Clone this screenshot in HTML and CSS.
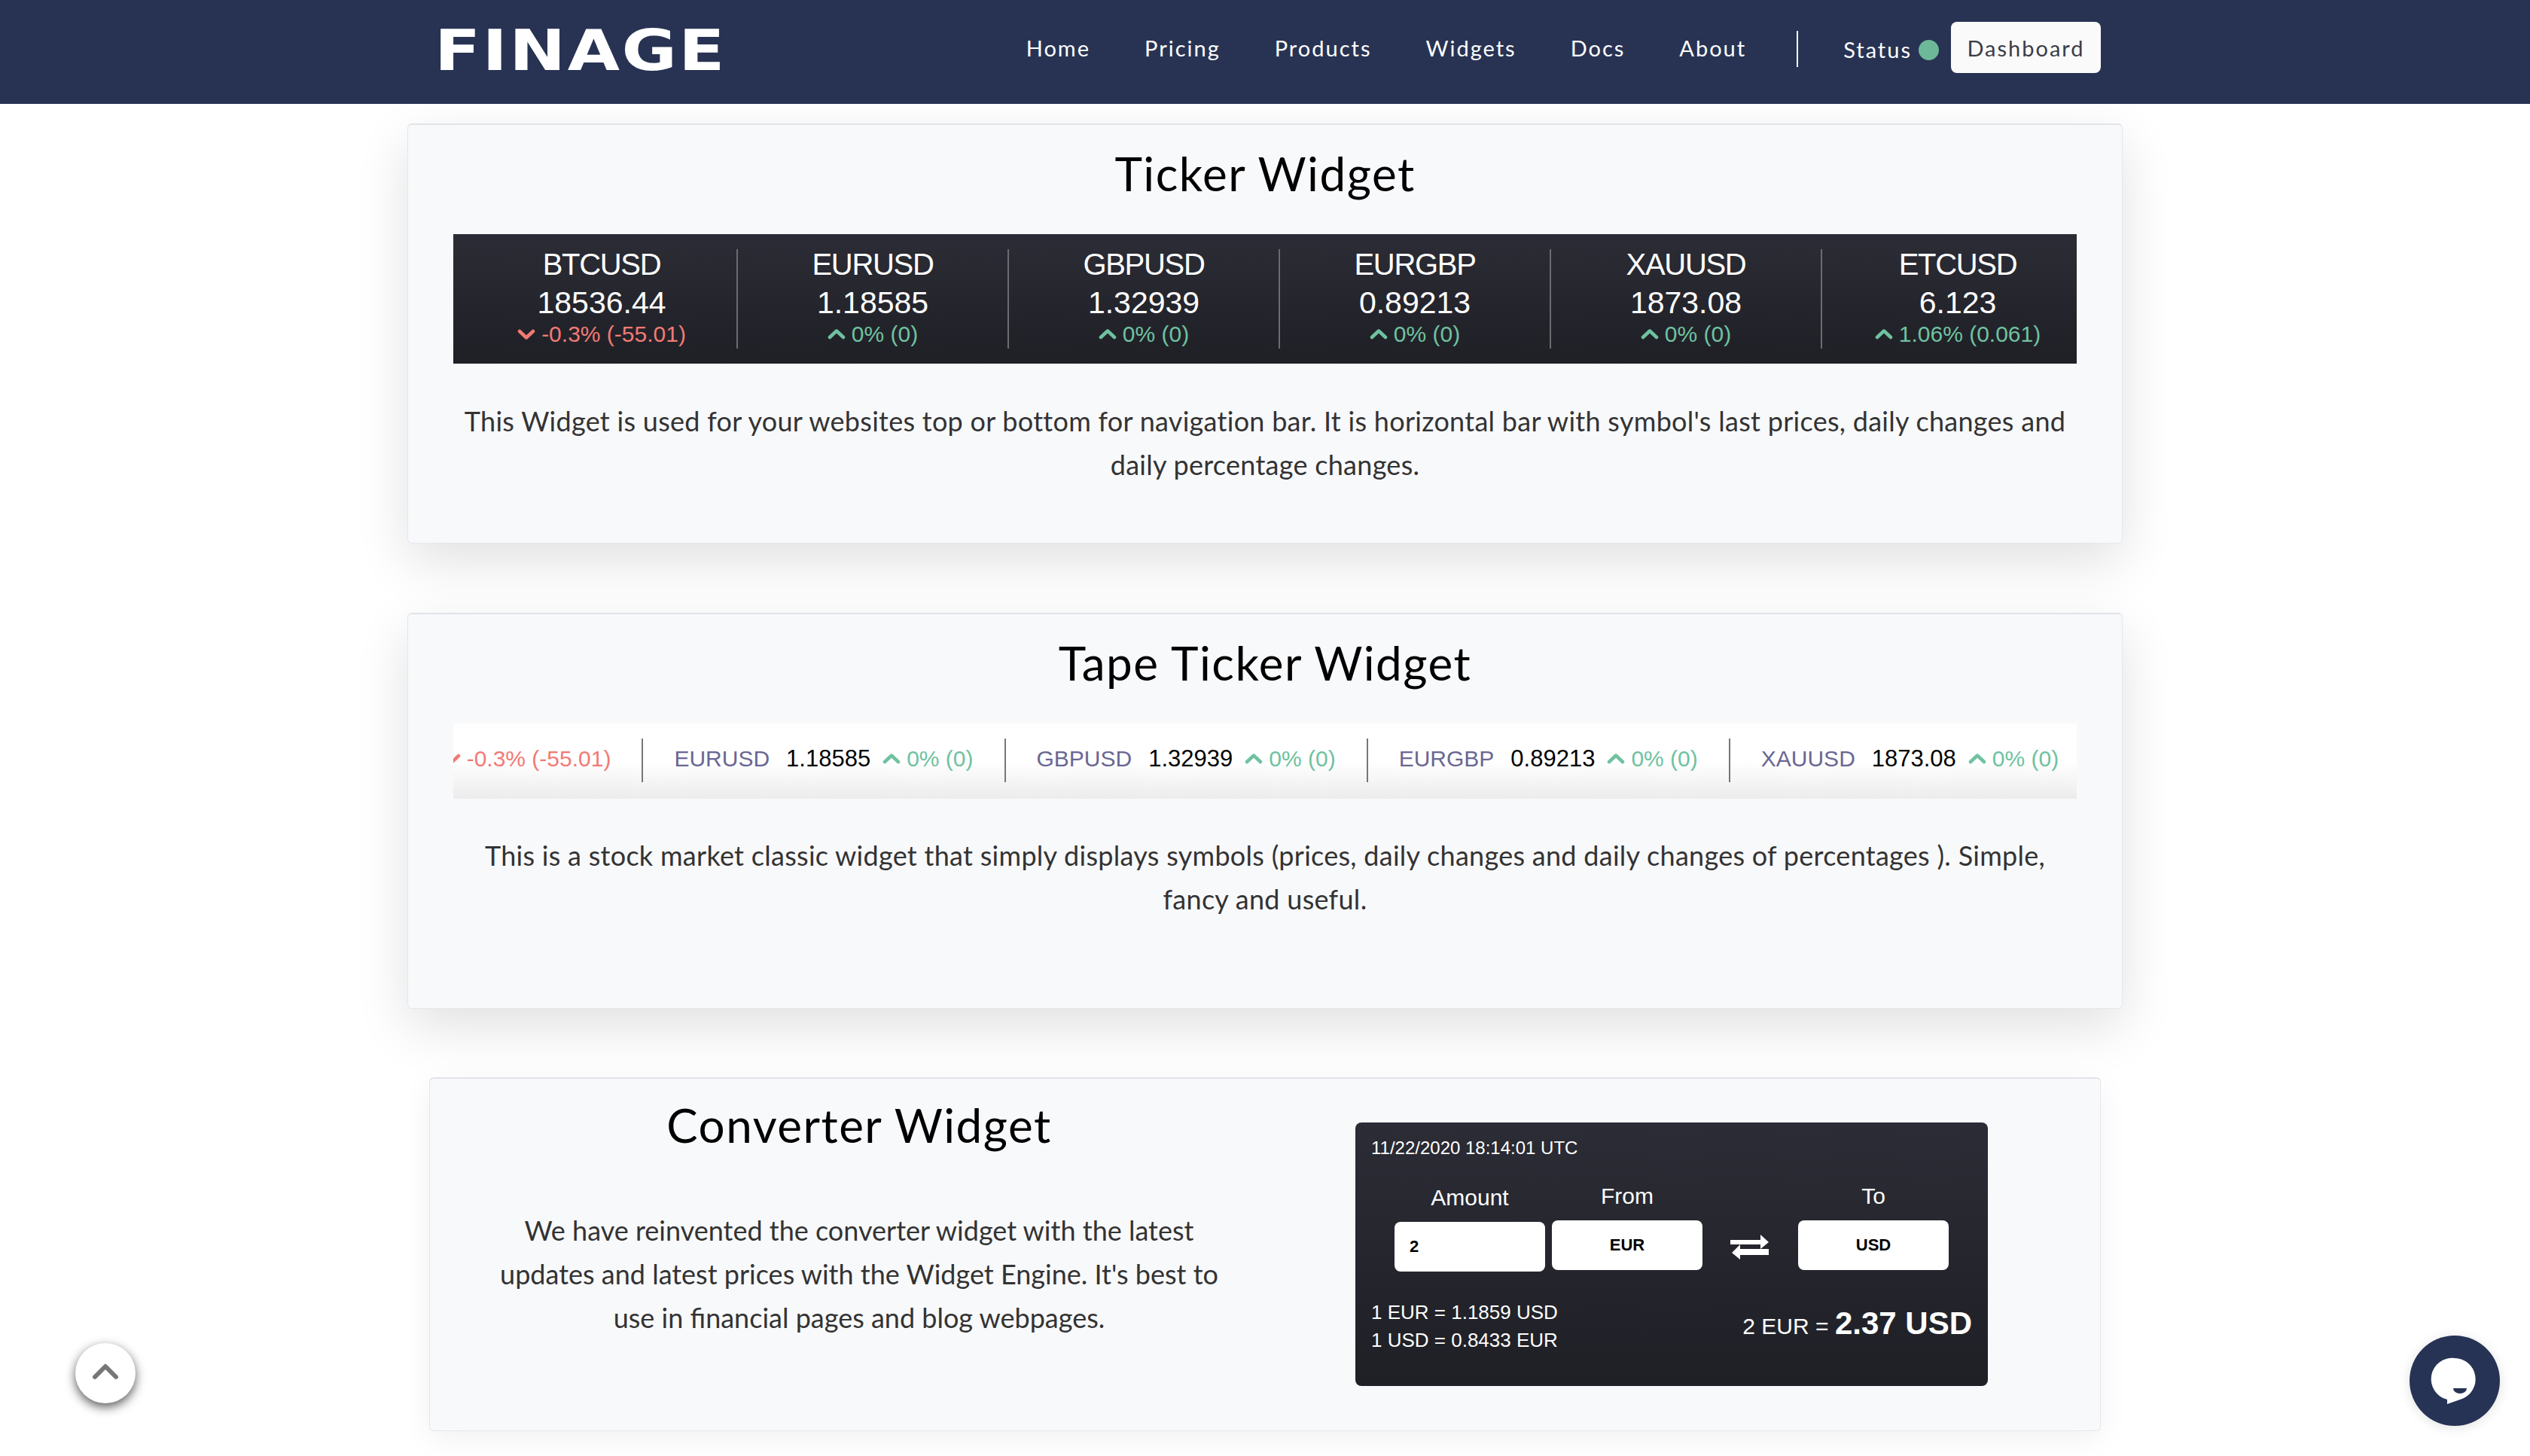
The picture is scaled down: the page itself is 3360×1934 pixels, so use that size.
FILE: index.html
```html
<!DOCTYPE html>
<html lang="en">

<head>
    <meta charset="UTF-8">
    <meta name="viewport" content="width=device-width, initial-scale=1.0">
    <title>Finage Widgets</title>
    <link rel="stylesheet" href="styles.css">
</head>

<body>
    <header class="topbar">
        <a class="logo"><span>FINAGE</span></a>
        <nav class="nav">
            <a>Home</a>
            <a>Pricing</a>
            <a>Products</a>
            <a>Widgets</a>
            <a>Docs</a>
            <a>About</a>
        </nav>
        <span class="nav-line"></span>
        <a class="status">Status</a>
        <span class="status-dot"></span>
        <a class="dash-btn">Dashboard</a>
    </header>

    <main class="main">
        <section class="card">
            <h2 class="title">Ticker Widget</h2>
            <div class="ticker">
                <div class="tick">
                    <div class="tick-sym">BTCUSD</div>
                    <div class="tick-price">18536.44</div>
                    <div class="tick-change red"><svg class="chev" viewBox="0 0 24 14"><path d="M3 3l9 8.500 9-8.500"/></svg>-0.3% (-55.01)</div>
                </div>
                <div class="tick">
                    <div class="tick-sym">EURUSD</div>
                    <div class="tick-price">1.18585</div>
                    <div class="tick-change green"><svg class="chev" viewBox="0 0 24 14"><path d="M3 11l9-8.500 9 8.500"/></svg>0% (0)</div>
                </div>
                <div class="tick">
                    <div class="tick-sym">GBPUSD</div>
                    <div class="tick-price">1.32939</div>
                    <div class="tick-change green"><svg class="chev" viewBox="0 0 24 14"><path d="M3 11l9-8.500 9 8.500"/></svg>0% (0)</div>
                </div>
                <div class="tick">
                    <div class="tick-sym">EURGBP</div>
                    <div class="tick-price">0.89213</div>
                    <div class="tick-change green"><svg class="chev" viewBox="0 0 24 14"><path d="M3 11l9-8.500 9 8.500"/></svg>0% (0)</div>
                </div>
                <div class="tick">
                    <div class="tick-sym">XAUUSD</div>
                    <div class="tick-price">1873.08</div>
                    <div class="tick-change green"><svg class="chev" viewBox="0 0 24 14"><path d="M3 11l9-8.500 9 8.500"/></svg>0% (0)</div>
                </div>
                <div class="tick">
                    <div class="tick-sym">ETCUSD</div>
                    <div class="tick-price">6.123</div>
                    <div class="tick-change green"><svg class="chev" viewBox="0 0 24 14"><path d="M3 11l9-8.500 9 8.500"/></svg>1.06% (0.061)</div>
                </div>
            </div>
            <p class="desc">This Widget is used for your websites top or bottom for navigation bar. It is horizontal bar with symbol's last prices, daily changes and daily percentage changes.</p>
        </section>

        <section class="card card-tape">
            <h2 class="title">Tape Ticker Widget</h2>
            <div class="tape">
                <div class="tape-track">
                    <div class="tape-item">
                        <span class="tape-sym">BTCUSD</span>
                        <span class="tape-price">18536.44</span>
                        <span class="tape-change red"><svg class="chev" viewBox="0 0 24 14"><path d="M3 3l9 8.500 9-8.500"/></svg>-0.3% (-55.01)</span>
                    </div>
                    <div class="tape-item">
                        <span class="tape-sym">EURUSD</span>
                        <span class="tape-price">1.18585</span>
                        <span class="tape-change green"><svg class="chev" viewBox="0 0 24 14"><path d="M3 11l9-8.500 9 8.500"/></svg>0% (0)</span>
                    </div>
                    <div class="tape-item">
                        <span class="tape-sym">GBPUSD</span>
                        <span class="tape-price">1.32939</span>
                        <span class="tape-change green"><svg class="chev" viewBox="0 0 24 14"><path d="M3 11l9-8.500 9 8.500"/></svg>0% (0)</span>
                    </div>
                    <div class="tape-item">
                        <span class="tape-sym">EURGBP</span>
                        <span class="tape-price">0.89213</span>
                        <span class="tape-change green"><svg class="chev" viewBox="0 0 24 14"><path d="M3 11l9-8.500 9 8.500"/></svg>0% (0)</span>
                    </div>
                    <div class="tape-item">
                        <span class="tape-sym">XAUUSD</span>
                        <span class="tape-price">1873.08</span>
                        <span class="tape-change green"><svg class="chev" viewBox="0 0 24 14"><path d="M3 11l9-8.500 9 8.500"/></svg>0% (0)</span>
                    </div>
                </div>
            </div>
            <p class="desc">This is a stock market classic widget that simply displays symbols (prices, daily changes and daily changes of percentages ). Simple, fancy and useful.</p>
        </section>

        <section class="card card-conv">
            <div class="conv-text">
                <h2 class="title">Converter Widget</h2>
                <p class="desc">We have reinvented the converter widget with the latest updates and latest prices with the Widget Engine. It's best to use in financial pages and blog webpages.</p>
            </div>
            <div class="conv-side">
                <div class="conv">
                    <div class="conv-date">11/22/2020 18:14:01 UTC</div>
                    <div class="conv-form">
                        <div class="conv-field conv-amount">
                            <label>Amount</label>
                            <div class="conv-input">2</div>
                        </div>
                        <div class="conv-field">
                            <label>From</label>
                            <div class="conv-select">EUR</div>
                        </div>
                        <svg class="swap" viewBox="0 0 51 36"><path d="M0 9h40V2l11 10-11 9v-6H0zM51 21H13v-6L2 26l11 9v-6h38z" fill="#fff" fill-rule="evenodd"/></svg>
                        <div class="conv-field">
                            <label>To</label>
                            <div class="conv-select">USD</div>
                        </div>
                    </div>
                    <div class="conv-foot">
                        <div class="conv-rates">
                            <div>1 EUR = 1.1859 USD</div>
                            <div>1 USD = 0.8433 EUR</div>
                        </div>
                        <div class="conv-result">2 EUR = <b>2.37 USD</b></div>
                    </div>
                </div>
            </div>
        </section>
    </main>

    <a class="to-top"><svg viewBox="0 0 36 22"><path d="M4 18L18 4l14 14"/></svg></a>
    <a class="chat">
        <svg viewBox="0 0 120 120">
            <path d="M60 30a28 28 0 0 1 10 54l-20 7 0-6a28 28 0 0 1 10-55z" fill="#fff"/>
            <path d="M58 70h18a9 7 0 0 1-18 0z" fill="#263354"/>
        </svg>
    </a>
</body>

</html>
```

FILE: styles.css
```css
* {
    margin: 0;
    padding: 0;
    box-sizing: border-box;
}

body {
    height: 1934px;
    overflow: hidden;
    background: #fff;
    font-family: "Lato", "Noto Sans", sans-serif;
    color: #000;
}

/* top bar */
.topbar {
    height: 138px;
    background: #283353;
    display: flex;
    align-items: center;
    padding: 0 570px 0 577px;
    color: #fff;
    position: relative;
    z-index: 2;
}

.logo {
    font-family: "DejaVu Sans", sans-serif;
    font-weight: 700;
    font-size: 74px;
    letter-spacing: 2px;
    line-height: 1;
    margin-right: auto;
    margin-top: -4px;
}

.logo span {
    display: inline-block;
    transform: scaleX(1.21);
    transform-origin: left center;
}

.nav {
    display: flex;
    gap: 72px;
    font-size: 29px;
    letter-spacing: 2px;
    margin-top: -12px;
}

.nav-line {
    width: 2px;
    height: 48px;
    background: #fff;
    margin: -8px 60px 0 67px;
}

.status {
    font-size: 29px;
    letter-spacing: 2px;
    margin-top: -8px;
}

.status-dot {
    width: 27px;
    height: 27px;
    border-radius: 50%;
    background: #6cb899;
    margin: -6px 16px 0 9px;
}

.dash-btn {
    width: 199px;
    height: 68px;
    background: #fafafa;
    border-radius: 8px;
    color: #3a3d47;
    font-size: 29px;
    letter-spacing: 2px;
    display: flex;
    align-items: center;
    justify-content: center;
    margin-top: -12px;
}

/* cards */
.main {
    padding-top: 26px;
    display: flex;
    flex-direction: column;
    align-items: center;
}

.card {
    width: 2278px;
    height: 558px;
    background: #f8f9fb;
    border: 1px solid #e6e7ec;
    border-top: 2px solid #e1e3e9;
    border-radius: 6px;
    box-shadow: 0 24px 70px rgba(0, 0, 0, 0.12);
    padding: 0 60px;
    margin-bottom: 92px;
}

.card-tape {
    height: 526px;
    margin-bottom: 91px;
}

.card-conv {
    width: 2220px;
    height: 470px;
    padding: 0;
    display: grid;
    grid-template-columns: 1140px 1fr;
    box-shadow: 0 10px 40px rgba(0, 0, 0, 0.06);
}

.title {
    font-weight: 400;
    font-size: 62px;
    letter-spacing: 1.5px;
    line-height: 80px;
    text-align: center;
    padding-top: 24px;
    margin-bottom: 41px;
}

.desc {
    font-size: 36px;
    letter-spacing: 0.28px;
    line-height: 58px;
    text-align: center;
    color: #333;
    padding-top: 47px;
}

/* dark ticker */
.ticker {
    height: 172px;
    display: flex;
    padding: 20px 0 0 18px;
    overflow: hidden;
    background: linear-gradient(180deg, #2b2c35, #1f2026);
    color: #fff;
    font-family: "Liberation Sans", sans-serif;
    text-align: center;
}

.tick {
    flex: 0 0 360px;
    height: 132px;
    border-right: 2px solid #6b6c70;
}

.tick:last-child {
    border-right: 0;
}

.tick-sym {
    font-size: 40px;
    letter-spacing: -1.3px;
    line-height: 40px;
}

.tick-price {
    font-size: 41px;
    line-height: 50px;
    margin-top: 6px;
}

.tick-change {
    font-size: 30px;
    line-height: 34px;
}

.chev {
    width: 24px;
    height: 14px;
    margin-right: 8px;
    vertical-align: 3px;
}

.chev path {
    fill: none;
    stroke: currentColor;
    stroke-width: 4.5;
    stroke-linecap: round;
    stroke-linejoin: round;
}

.red {
    color: #f27a74;
}

.green {
    color: #6fc2a0;
}

/* light tape */
.tape {
    height: 100px;
    overflow: hidden;
    background: linear-gradient(180deg, #fff 50%, #ececec);
    font-family: "Liberation Sans", sans-serif;
}

.tape-track {
    display: flex;
    margin-left: -346px;
    padding-top: 20px;
}

.tape-item {
    flex: none;
    height: 58px;
    display: flex;
    align-items: center;
    padding: 0 41px 4px;
    border-right: 2px solid #777;
    font-size: 30px;
    white-space: nowrap;
}

.tape-item:last-child {
    border-right: 0;
}

.tape-sym {
    color: #6a6793;
}

.tape-price {
    font-size: 31px;
    margin-left: 22px;
}

.tape-change {
    margin-left: 16px;
}

.card-tape .desc {
    padding-top: 46px;
}

/* converter */
.conv-text {
    padding: 0 90px;
}

.conv-text .title {
    padding-top: 0;
    margin: 21px 0 0;
}

.conv-text .desc {
    letter-spacing: 0;
    padding-top: 71px;
}

.conv-side {
    padding: 58px 0 0 89px;
}

.conv {
    width: 840px;
    height: 350px;
    border-radius: 8px;
    background: linear-gradient(180deg, #2b2c35, #1f2026);
    color: #fff;
    font-family: "Liberation Sans", sans-serif;
    padding: 20px 21px 0;
}

.conv-date {
    font-size: 24px;
    line-height: 28px;
}

.conv-form {
    display: flex;
    align-items: flex-start;
    margin: 33px 0 0 31px;
}

.conv-field {
    width: 200px;
    text-align: center;
    margin-right: 9px;
}

.conv-field label {
    display: block;
    font-size: 30px;
    line-height: 34px;
    margin-bottom: 15px;
}

.conv-amount label {
    margin-top: 2px;
}

.conv-input,
.conv-select {
    height: 66px;
    background: #fff;
    border-radius: 8px;
    color: #000;
    font-size: 22px;
    font-weight: 700;
    line-height: 66px;
}

.conv-input {
    text-align: left;
    padding-left: 20px;
}

.swap {
    width: 51px;
    height: 36px;
    margin: 66px 39px 0 28px;
    flex: none;
}

.conv-foot {
    display: flex;
    align-items: center;
    justify-content: space-between;
    margin-top: 36px;
}

.conv-rates {
    font-size: 26px;
    line-height: 37px;
}

.conv-result {
    font-size: 30px;
    margin-top: -8px;
}

.conv-result b {
    font-size: 42px;
}

/* floating buttons */
.to-top {
    position: fixed;
    left: 100px;
    top: 1784px;
    width: 80px;
    height: 80px;
    border-radius: 50%;
    background: #fff;
    box-shadow: 0 5px 14px rgba(0, 0, 0, 0.65);
    display: flex;
    align-items: center;
    justify-content: center;
}

.to-top svg {
    width: 36px;
    height: 22px;
    margin-top: -4px;
}

.to-top path {
    fill: none;
    stroke: #777;
    stroke-width: 6;
    stroke-linecap: round;
    stroke-linejoin: round;
}

.chat {
    position: fixed;
    left: 3200px;
    top: 1774px;
    width: 120px;
    height: 120px;
    border-radius: 50%;
    background: #263354;
    box-shadow: 0 2px 16px rgba(0, 0, 0, 0.12);
}

.chat svg {
    display: block;
    width: 120px;
    height: 120px;
}
```
